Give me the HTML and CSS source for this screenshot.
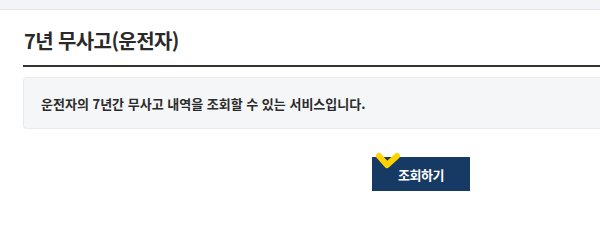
FILE: index.html
```html
<!DOCTYPE html>
<html lang="ko">
<head>
<meta charset="utf-8">
<title>7년 무사고(운전자)</title>
<link rel="stylesheet" href="styles.css">
</head>
<body>
<div class="topbar"></div>
<main class="content">
  <h2 class="title">7년 무사고(운전자)</h2>
  <div class="info">운전자의 7년간 무사고 내역을 조회할 수 있는 서비스입니다.</div>
  <div class="actions">
    <button class="btn" type="button">
      <svg class="check" width="30" height="20" viewBox="0 0 30 20" aria-hidden="true">
        <path d="M7 4 L15 13 L25 4" fill="none" stroke="#ffd200" stroke-width="6" stroke-linecap="round" stroke-linejoin="round"/>
      </svg>
      <span class="btn-label">조회하기</span>
    </button>
  </div>
</main>
</body>
</html>
```
FILE: styles.css
```css
html, body {
  margin: 0;
  padding: 0;
  background: #ffffff;
}
body {
  font-family: "Noto Sans CJK KR", "Noto Sans", sans-serif;
  color: #222;
}
.topbar {
  height: 9px;
  background: #f3f4f8;
  border-bottom: 1px solid #e6e7ec;
}
.content {
  padding-left: 23px;
}
.title {
  margin: 17px 0 0;
  font-size: 20px;
  line-height: 28px;
  font-weight: 700;
  letter-spacing: -0.6px;
  color: #2a2a2a;
  padding: 0 0 10px 1px;
  border-bottom: 2px solid #333;
}
.info {
  margin-top: 10px;
  box-sizing: border-box;
  height: 52px;
  display: flex;
  align-items: center;
  padding-left: 17px;
  background: #f5f6f8;
  border: 1px solid #e9eaee;
  border-right: 0;
  border-radius: 4px 0 0 4px;
  font-size: 13px;
  font-weight: 700;
  letter-spacing: 0;
  color: #2b2b2b;
}
.actions {
  display: flex;
  margin-top: 28px;
  padding-left: 349px;
}
.btn {
  position: relative;
  width: 98px;
  height: 34px;
  border: 0;
  padding: 0;
  background: #173a65;
  color: #fff;
  font-family: inherit;
  font-size: 13px;
  font-weight: 700;
  letter-spacing: -0.5px;
  cursor: pointer;
}
.check {
  position: absolute;
  left: 0;
  top: -5px;
}
.btn-label {
  position: relative;
}
```
